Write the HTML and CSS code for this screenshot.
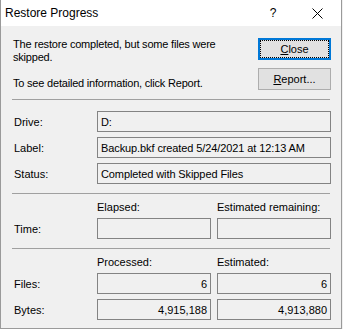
FILE: index.html
```html
<!DOCTYPE html>
<html lang="en">
<head>
    <meta charset="UTF-8">
    <title>Restore Progress</title>
    <link rel="stylesheet" href="styles.css">
</head>
<body>
    <div class="window">
        <!-- Title bar -->
        <div class="titlebar">
            <span class="title">Restore Progress</span>
            <span class="help">?</span>
            <span class="close-x">
                <svg width="11" height="11" viewBox="0 0 11 11"><path d="M0.5 0.5 L10.5 10.5 M10.5 0.5 L0.5 10.5" stroke="#000" stroke-width="1" fill="none"/></svg>
            </span>
        </div>

        <div class="content">
            <!-- Message and buttons -->
            <div class="top">
                <div class="message">
                    <p>The restore completed, but some files were skipped.</p>
                    <p class="hint">To see detailed information, click Report.</p>
                </div>
                <div class="buttons">
                    <button class="btn default"><u>C</u>lose</button>
                    <button class="btn"><u>R</u>eport...</button>
                </div>
            </div>

            <div class="sep"></div>

            <!-- Details -->
            <div class="grid details">
                <span class="label">Drive:</span>
                <div class="field wide">D:</div>
                <span class="label">Label:</span>
                <div class="field wide">Backup.bkf created 5/24/2021 at 12:13 AM</div>
                <span class="label">Status:</span>
                <div class="field wide">Completed with Skipped Files</div>
            </div>

            <div class="sep"></div>

            <!-- Time -->
            <div class="grid section">
                <span></span>
                <span class="head">Elapsed:</span>
                <span class="head">Estimated remaining:</span>
                <span class="label">Time:</span>
                <div class="field"></div>
                <div class="field"></div>
            </div>

            <div class="sep"></div>

            <!-- Files -->
            <div class="grid section">
                <span></span>
                <span class="head">Processed:</span>
                <span class="head">Estimated:</span>
                <span class="label">Files:</span>
                <div class="field num">6</div>
                <div class="field num">6</div>
                <span class="label">Bytes:</span>
                <div class="field num">4,915,188</div>
                <div class="field num">4,913,880</div>
            </div>
        </div>
    </div>
</body>
</html>
```

FILE: styles.css
```css
* { margin: 0; padding: 0; box-sizing: border-box; }
body {
    font-family: "Liberation Sans", Arial, sans-serif;
    font-size: 11px;
    color: #000;
    background: #f0f0f0;
}
.window {
    width: 342px;
    height: 329px;
    border: 1px solid #9a9a9a;
    border-top: none;
    background: #f0f0f0;
}

/* Title bar */
.titlebar {
    height: 26px;
    background: #fff;
    display: flex;
    align-items: center;
    padding-left: 4px;
}
.title { font-size: 12px; flex: 1; padding-bottom: 1px; }
.help { font-size: 12px; width: 46px; text-align: center; margin-left: 2px; }
.close-x { width: 45px; display: flex; justify-content: center; align-items: center; padding-right: 2px; }

.content { padding: 12px 10px 0 11px; }

/* Message and buttons */
.top { display: flex; justify-content: space-between; }
.message { width: 215px; line-height: 13px; padding-left: 1px; letter-spacing: -0.2px; }
.message .hint { margin-top: 13px; }
.buttons { display: flex; flex-direction: column; gap: 8px; }
.btn {
    width: 73px;
    height: 22px;
    font-family: inherit;
    font-size: 11px;
    color: #000;
    background: #e1e1e1;
    border: 1px solid #adadad;
}
.btn.default {
    border: 2px solid #0078d7;
    outline: 1px dotted #000;
    outline-offset: -3px;
}

.sep { height: 1px; background: #a0a0a0; margin: 9px 1px 0 0; }

/* Fields */
.grid {
    display: grid;
    grid-template-columns: 79px 1fr 1fr;
    column-gap: 6px;
    align-items: center;
}
.details { row-gap: 5px; margin-top: 11px; margin-bottom: 8px; }
.section { row-gap: 5px; margin-top: 7px; margin-bottom: 9px; }
.section .head { line-height: 13px; margin-bottom: -1px; }
.label { padding-left: 2px; }
.field {
    height: 21px;
    border: 1px solid #838383;
    background: #f0f0f0;
    padding: 0 3px;
    display: flex;
    align-items: center;
    white-space: nowrap;
}
.field.wide { grid-column: span 2; letter-spacing: -0.1px; }
.field.num { justify-content: flex-end; }
```
